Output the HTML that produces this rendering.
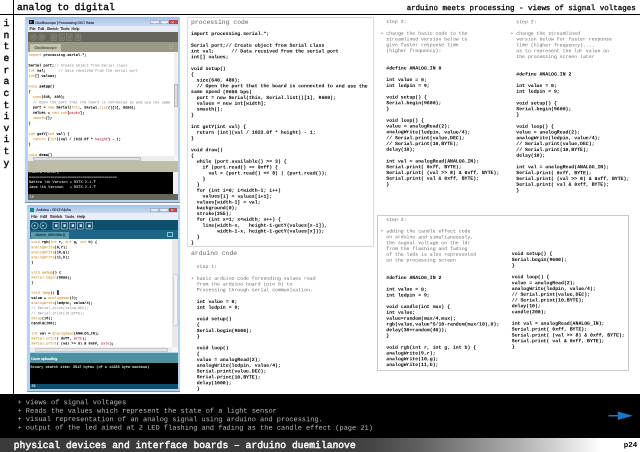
<!DOCTYPE html>
<html><head><meta charset="utf-8"><title>analog to digital</title>
<style>
html,body{margin:0;padding:0;background:#fff;}
body{text-rendering:geometricPrecision;width:640px;height:452px;position:relative;overflow:hidden;font-family:"Liberation Mono","DejaVu Sans Mono",monospace;color:#000;}
.abs{position:absolute;}
pre{margin:0;font-family:inherit;}
.code{position:absolute;font-size:4.84px;line-height:5.81px;font-weight:bold;color:#000;white-space:pre;}
.code .g{font-weight:normal;color:#777;}
.h{position:absolute;font-size:6.42px;line-height:7.7px;color:#666;white-space:pre;}
.box{position:absolute;border:1px solid #d6d6d6;box-sizing:border-box;background:#fff;}
</style></head><body><div id="wrap" style="will-change:transform;position:absolute;left:0;top:0;width:640px;height:452px;overflow:hidden;">

<!-- header -->
<div class="abs" style="left:0;top:13.5px;width:640px;height:1.2px;background:#000;"></div>
<div class="abs" style="left:13.1px;top:0;width:1.1px;height:394px;background:#000;"></div>
<div class="abs" style="left:17px;top:1.5px;font-size:9.6px;line-height:11.5px;font-weight:normal;-webkit-text-stroke:0.38px;white-space:pre;">analog to digital</div>
<div class="abs" style="right:4.3px;top:4.7px;font-size:7.49px;line-height:9px;font-weight:normal;-webkit-text-stroke:0.28px;white-space:pre;">arduino meets processing - views of signal voltages</div>

<!-- vertical word -->
<div class="abs" style="left:3.5px;top:18.2px;width:6px;font-size:9.67px;line-height:11.62px;font-weight:normal;-webkit-text-stroke:0.38px;text-align:center;white-space:pre;">i
n
t
e
r
a
c
t
i
v
i
t
y</div>


<!-- ===== Processing window ===== -->
<style>
.ed{position:absolute;font-size:3.58px;white-space:pre;color:#000;-webkit-text-stroke:0.06px;}
.k{color:#cf8c2e;} .c{color:#7c7c7c;} .r{color:#c4274a;}
.ui{position:absolute;font-family:"Liberation Sans",sans-serif;white-space:pre;-webkit-text-stroke:0.12px;}
</style>
<div class="abs" style="left:25px;top:17px;width:155.4px;height:185.4px;background:linear-gradient(#9dbbe0 0,#b0c9e8 2px,#bad0eb 5px,#c6d9f0 8.5px,#bdd4ef 14px,#b7d0ef 100%);border-radius:1.5px 1.5px 0 0;box-shadow:0 0 0.8px #8aa;"></div>
<!-- title -->
<div class="abs" style="left:29.2px;top:19.7px;width:4.5px;height:4.3px;background:#1a1a1a;"></div><svg class="abs" style="left:29.2px;top:19.7px;" width="4.5" height="4.3" viewBox="0 0 4.5 4.3"><path d="M0.8 0.9 L2.6 1.9 L0.8 2.9" fill="none" stroke="#e8e8e8" stroke-width="0.6"/></svg>
<div class="ui" style="left:35.3px;top:20.7px;font-size:3.6px;line-height:5px;color:#1d2b40;">Oscilloscope | Processing 0157 Beta</div>
<div class="abs" style="left:150.2px;top:19.6px;width:9.4px;height:4.7px;background:#e3e9f3;border:0.4px solid #a3b3cc;box-sizing:border-box;"></div>
<div class="abs" style="left:159.6px;top:19.6px;width:9.6px;height:4.7px;background:#e3e9f3;border:0.4px solid #a3b3cc;box-sizing:border-box;"></div>
<div class="abs" style="left:169.2px;top:19.6px;width:8.7px;height:4.7px;background:#cc4a40;border:0.4px solid #a05050;box-sizing:border-box;"></div>
<svg class="abs" style="left:150.2px;top:19.6px;" width="28" height="4.7" viewBox="0 0 28 4.7"><path d="M3.5 3.2h2.4 M13 1.6h2.6v1.8H13z M21.6 1.5l2 1.8 M23.6 1.5l-2 1.8" fill="none" stroke="#f4f6fa" stroke-width="0.55"/></svg>
<!-- menu -->
<div class="abs" style="left:28.2px;top:25.6px;width:150px;height:6.3px;background:#e6edf7;"></div>
<div class="ui" style="left:29.5px;top:27.2px;font-size:3.8px;line-height:5px;color:#1a1a1a;word-spacing:1.2px;">File Edit Sketch Tools Help</div>
<!-- toolbar -->
<div class="abs" style="left:28.2px;top:31.9px;width:150px;height:10.1px;background:#67665a;"></div>
<svg class="abs" style="left:28.2px;top:31.9px;" width="150" height="10.1" viewBox="0 0 150 10.1">
<g fill="#706f62" stroke="#8d8c7e" stroke-width="0.55">
<circle cx="5.6" cy="5.1" r="3.3"/><circle cx="13.8" cy="5.1" r="3.3"/>
<rect x="22.9" y="1.9" width="5.6" height="6.5"/><rect x="31" y="1.9" width="5.2" height="6.5"/><rect x="38.5" y="1.9" width="5.6" height="6.5"/><rect x="47.2" y="1.9" width="5.6" height="6.5"/>
</g>
<g fill="none" stroke="#98978a" stroke-width="0.5">
<circle cx="5.6" cy="5.1" r="1.3"/><circle cx="13.8" cy="5.1" r="1.3"/>
<path d="M24.4 3.4h2.4v3.4h-2.4z M32.4 3.6v3.2h2.4 M40.2 3.4l1.2 3.2 1.2-3.2 M48.8 6.6l1.2-3.2 1.2 3.2"/>
</g></svg>
<!-- tab row -->
<div class="abs" style="left:28.2px;top:42px;width:150px;height:9.6px;background:#9a9987;"></div>
<div class="abs" style="left:29.8px;top:43.6px;width:31.1px;height:8px;background:#c5c4b1;"></div>
<div class="ui" style="left:34.5px;top:45px;font-size:3.9px;line-height:5px;color:#55554a;">Oscilloscope</div>
<div class="abs" style="left:169px;top:44.3px;width:4.2px;height:4.6px;border:0.4px solid #a9a897;box-sizing:border-box;"></div>
<!-- editor -->
<div class="abs" style="left:28.2px;top:51.6px;width:150px;height:109.8px;background:#fff;overflow:hidden;"></div>

<!-- v scrollbar -->
<div class="abs" style="left:173.5px;top:51.6px;width:4.7px;height:104.8px;background:#f0f0f0;"></div>
<div class="abs" style="left:173.7px;top:84.1px;width:4.3px;height:23.4px;background:#e0e0e0;border:0.4px solid #b4b4b4;box-sizing:border-box;border-radius:0.8px;"></div>
<!-- h scrollbar -->
<div class="abs" style="left:28.2px;top:156.4px;width:150px;height:5px;background:#eeeeee;"></div>
<div class="abs" style="left:33.4px;top:156.7px;width:107.6px;height:4.4px;background:#e2e2e2;border:0.4px solid #bcbcbc;box-sizing:border-box;border-radius:0.8px;"></div>
<div class="abs" style="left:173.5px;top:156.4px;width:4.7px;height:5px;background:#f6f6f6;"></div>
<!-- status -->
<div class="abs" style="left:28.2px;top:161.4px;width:150px;height:11px;background:#bebdaa;"></div>
<!-- console -->
<div class="abs" style="left:28.2px;top:172.4px;width:150px;height:21.6px;background:#f0f0f0;"></div>
<div class="abs" style="left:28.2px;top:172.4px;width:144.7px;height:21.6px;background:#000;overflow:hidden;">
<pre class="ed" style="left:0.8px;top:-1.4px;line-height:5px;color:#d8d8d8;">Stable Library
=========================================
Native lib Version = RXTX-2.1-7
Java lib Version   = RXTX-2.1-7</pre></div>
<!-- bottom bar -->
<div class="abs" style="left:28.2px;top:194px;width:150px;height:5.7px;background:#67665a;"></div>
<div class="ui" style="left:29.8px;top:195.4px;font-size:3.4px;line-height:4.4px;color:#cfcfc0;">16</div>
<div class="abs" style="left:25px;top:201.9px;width:155.4px;height:0.6px;background:#7f8fa6;"></div>


<!-- ===== Arduino window ===== -->
<div class="abs" style="left:27px;top:205.2px;width:153px;height:186.4px;background:linear-gradient(#9dbbe0 0,#b0c9e8 2px,#bad0eb 4.5px,#c6d9f0 7.5px,#bdd4ef 13px,#b7d0ef 100%);border-radius:1.5px 1.5px 0 0;box-shadow:0 0 0.8px #8aa;"></div>
<div class="abs" style="left:30.2px;top:208.2px;width:4.2px;height:3.8px;background:#1e7f8e;"></div>
<div class="ui" style="left:36.3px;top:208.4px;font-size:3.7px;line-height:5px;color:#1d2b40;">Arduino - 0012 Alpha</div>
<div class="abs" style="left:150.2px;top:208.2px;width:9.2px;height:4.2px;background:#e3e9f3;border:0.4px solid #a3b3cc;box-sizing:border-box;"></div>
<div class="abs" style="left:159.4px;top:208.2px;width:9.4px;height:4.2px;background:#e3e9f3;border:0.4px solid #a3b3cc;box-sizing:border-box;"></div>
<div class="abs" style="left:168.8px;top:208.2px;width:8.4px;height:4.2px;background:#cc4a40;border:0.4px solid #a05050;box-sizing:border-box;"></div>
<svg class="abs" style="left:150.2px;top:208.2px;" width="28" height="4.2" viewBox="0 0 28 4.2"><path d="M3.5 2.9h2.4 M13 1.4h2.6v1.6H13z M21.4 1.3l2 1.7 M23.4 1.3l-2 1.7" fill="none" stroke="#f4f6fa" stroke-width="0.55"/></svg>
<!-- menu -->
<div class="abs" style="left:29.6px;top:212.7px;width:148.2px;height:7.1px;background:#e9eff8;"></div>
<div class="ui" style="left:31px;top:214.3px;font-size:4.1px;line-height:5px;color:#1a1a1a;word-spacing:1.4px;">File Edit Sketch Tools Help</div>
<!-- toolbar -->
<div class="abs" style="left:29.6px;top:219.8px;width:148.2px;height:10.6px;background:#0c4f6e;"></div>
<svg class="abs" style="left:29.6px;top:219.8px;" width="148.2" height="10.6" viewBox="0 0 148.2 10.6">
<g fill="none" stroke="#c9dde6" stroke-width="0.6">
<circle cx="4.8" cy="5.7" r="3.3"/><circle cx="13.3" cy="5.7" r="3.3"/>
<rect x="23" y="2.4" width="6" height="6.6"/><rect x="31.5" y="2.4" width="6" height="6.6"/><rect x="39.6" y="2.4" width="6" height="6.6"/><rect x="47.6" y="2.4" width="6" height="6.6"/><rect x="55.9" y="2.4" width="6.6" height="6.6"/>
</g>
<g fill="#c9dde6"><circle cx="4.6" cy="5.6" r="0.9"/><circle cx="13" cy="5.6" r="0.9"/><rect x="25" y="4.2" width="2.4" height="2.8"/><rect x="33.4" y="4.2" width="2.4" height="2.8"/><rect x="41.6" y="4.2" width="2.4" height="2.8"/><rect x="49.6" y="4.2" width="2.4" height="2.8"/><rect x="58" y="4.6" width="2.8" height="2.6"/></g>
</svg>
<!-- tab row -->
<div class="abs" style="left:29.6px;top:230.4px;width:148.2px;height:8.5px;background:#1c6689;"></div>
<div class="abs" style="left:31.3px;top:231.8px;width:37.5px;height:7.1px;background:#5b9aa9;"></div>
<div class="ui" style="left:35.6px;top:233.2px;font-size:3.6px;line-height:5px;color:#0b3442;">sketch_090108a §</div>
<div class="abs" style="left:167.2px;top:232.2px;width:5.4px;height:5.3px;border:0.5px solid #8fc0cf;box-sizing:border-box;"></div>
<!-- editor -->
<div class="abs" style="left:29.6px;top:238.9px;width:148.2px;height:113.4px;background:#fff;"></div>

<div class="abs" style="left:56.9px;top:290.2px;width:2.3px;height:4.9px;background:#c8ccd0;border:0.3px solid #666;box-sizing:border-box;"></div>
<!-- v scrollbar -->
<div class="abs" style="left:172.4px;top:238.9px;width:5.4px;height:108.5px;background:#e9e9e9;"></div>
<div class="abs" style="left:172.6px;top:273.7px;width:5px;height:52.3px;background:#f4f4f4;border:0.4px solid #d2d2d2;box-sizing:border-box;border-radius:0.8px;"></div>
<!-- h scrollbar -->
<div class="abs" style="left:29.6px;top:347.4px;width:148.2px;height:4.9px;background:#efefef;"></div>
<div class="abs" style="left:34.6px;top:347.7px;width:133.5px;height:4.3px;background:#e6e6e6;border:0.4px solid #c8c8c8;box-sizing:border-box;border-radius:0.8px;"></div>
<div class="abs" style="left:172.4px;top:347.4px;width:5.4px;height:5.1px;background:#f6f6f6;"></div>
<!-- status -->
<div class="abs" style="left:29.6px;top:352.5px;width:148.2px;height:10.4px;background:#4b919f;"></div>
<div class="ui" style="left:31.3px;top:356.6px;font-size:3.7px;line-height:5px;color:#fff;">Done uploading.</div>
<!-- console -->
<div class="abs" style="left:29.6px;top:362.8px;width:148.2px;height:21px;background:#000;overflow:hidden;">
<pre class="ed" style="left:1px;top:3px;line-height:5px;font-size:3.54px;color:#e0e0e0;">Binary sketch size: 3942 bytes (of a 14336 byte maximum)</pre></div>
<!-- bottom bar -->
<div class="abs" style="left:29.6px;top:383.8px;width:148.2px;height:5.7px;background:#0c4f6e;"></div>
<div class="ui" style="left:31.6px;top:384.4px;font-size:3.4px;line-height:4.4px;color:#d8e8ee;">20</div>
<div class="abs" style="left:27px;top:391.2px;width:153px;height:0.5px;background:#7f8fa6;"></div>

<svg class="abs et" style="left:0;top:0;" width="640" height="452" viewBox="0 0 640 452" xml:space="preserve">
<style>.et text{font-family:"Liberation Mono","DejaVu Sans Mono",monospace;fill:#000;stroke:#000;stroke-width:.12px;white-space:pre;}.et .k{fill:#cf953a;stroke:#cf953a;stroke-width:.05px;}.et .c{fill:#7c7c7c;stroke:none;}.et .r{fill:#c4274a;stroke:#c4274a;stroke-width:.06px;}.et .b{font-weight:bold;}</style>
<g transform="translate(28.50 0) skewY(0.03)" style="font-size:3.58px">
<text x="0" y="56.00"><tspan class="k">import</tspan> processing.serial.*;</text>
<text x="0" y="66.52">Serial port;<tspan class="c">// Create object from Serial class</tspan></text>
<text x="0" y="71.78"><tspan class="k">int</tspan> val;      <tspan class="c">// Data received from the serial port</tspan></text>
<text x="0" y="77.04"><tspan class="k">int</tspan>[] values;</text>
<text x="0" y="87.56"><tspan class="k">void</tspan> <tspan class="b">setup</tspan>()</text>
<text x="0" y="92.82">{</text>
<text x="0" y="98.08">  <tspan class="k">size</tspan>(640, 480);</text>
<text x="0" y="103.34">  <tspan class="c">// Open the port that the board is connected to and use the same</tspan></text>
<text x="0" y="108.60">  port = <tspan class="k">new</tspan> Serial(<tspan class="k">this</tspan>, Serial.<tspan class="k">list</tspan>()[1], 9600);</text>
<text x="0" y="113.86">  values = <tspan class="k">new int</tspan>[<tspan class="r">width</tspan>];</text>
<text x="0" y="119.12">  <tspan class="k">smooth</tspan>();</text>
<text x="0" y="124.38">}</text>
<text x="0" y="134.90"><tspan class="k">int</tspan> getY(<tspan class="k">int</tspan> val) {</text>
<text x="0" y="140.16">  <tspan class="k">return</tspan> (<tspan class="k">int</tspan>)(val / 1023.0f * <tspan class="r">height</tspan>) - 1;</text>
<text x="0" y="145.42">}</text>
<text x="0" y="155.94"><tspan class="k">void</tspan> <tspan class="b">draw</tspan>()</text>
</g>
<g transform="translate(31.30 0) skewY(0.03)" style="font-size:3.54px">
<text x="0" y="243.10"><tspan class="k">void</tspan> rgb(<tspan class="k">int</tspan> r, <tspan class="k">int</tspan> g, <tspan class="k">int</tspan> b) {</text>
<text x="0" y="248.17"><tspan class="k">analogWrite</tspan>(9,r);</text>
<text x="0" y="253.25"><tspan class="k">analogWrite</tspan>(10,g);</text>
<text x="0" y="258.32"><tspan class="k">analogWrite</tspan>(11,b);</text>
<text x="0" y="263.40">}</text>
<text x="0" y="273.55"><tspan class="k">void</tspan> <tspan class="b k">setup</tspan>() {</text>
<text x="0" y="278.62"><tspan class="k">Serial.begin</tspan>(9600);</text>
<text x="0" y="283.70">}</text>
<text x="0" y="293.85"><tspan class="k">void</tspan> <tspan class="b k">loop</tspan>() {</text>
<text x="0" y="298.93">value = <tspan class="k">analogRead</tspan>(2);</text>
<text x="0" y="304.00"><tspan class="k">analogWrite</tspan>(ledpin, value/4);</text>
<text x="0" y="309.07"><tspan class="c">// Serial.print(value,DEC);</tspan></text>
<text x="0" y="314.15"><tspan class="c">// Serial.print(10,BYTE);</tspan></text>
<text x="0" y="319.23"><tspan class="k">delay</tspan>(10);</text>
<text x="0" y="324.30">candle(200);</text>
<text x="0" y="334.45"><tspan class="k">int</tspan> val = <tspan class="k">analogRead</tspan>(ANALOG_IN);</text>
<text x="0" y="339.52"><tspan class="k">Serial.print</tspan>( 0xff, <tspan class="r">BYTE</tspan>);</text>
<text x="0" y="344.60"><tspan class="k">Serial.print</tspan>( (val &gt;&gt; 8) &amp; 0xff, <tspan class="r">BYTE</tspan>);</text>
</g>
</svg>
<!-- boxes -->
<div class="box" style="left:186.9px;top:16.9px;width:186.7px;height:229.9px;border-color:#dadada;"></div>
<div class="box" style="left:377.2px;top:215.2px;width:251.6px;height:156.2px;border-color:#cacaca;"></div>

<div class="h" style="left:191px;top:19.1px;">processing code</div>
<div class="h" style="left:191px;top:249.9px;">arduino code</div>


<!-- processing code -->


<!-- arduino code step 1 -->


<!-- step 2 left -->


<!-- step 2 right -->


<!-- step 3 left -->


<!-- step 3 right -->


<svg class="abs ct" style="left:0;top:0;" width="640" height="452" viewBox="0 0 640 452" xml:space="preserve">
<style>.ct text{font-family:"Liberation Mono","DejaVu Sans Mono",monospace;font-size:4.84px;font-weight:bold;fill:#000;white-space:pre;}.ct text.g{font-weight:normal;fill:#6b6b6b;}</style>
<g transform="translate(191.00 0) skewY(0.03)">
<text x="0.00" y="35.05">import processing.serial.*;</text>
<text x="0.00" y="46.66">Serial port;// Create object from Serial class</text>
<text x="0.00" y="52.47">int val;      // Data received from the serial port</text>
<text x="0.00" y="58.27">int[] values;</text>
<text x="0.00" y="69.89">void setup()</text>
<text x="0.00" y="75.69">{</text>
<text x="5.81" y="81.50">size(640, 480);</text>
<text x="5.81" y="87.30">// Open the port that the board is connected to and use the</text>
<text x="0.00" y="93.11">same speed (9600 bps)</text>
<text x="5.81" y="98.92">port = new Serial(this, Serial.list()[1], 9600);</text>
<text x="5.81" y="104.72">values = new int[width];</text>
<text x="5.81" y="110.53">smooth();</text>
<text x="0.00" y="116.33">}</text>
<text x="0.00" y="127.95">int getY(int val) {</text>
<text x="5.81" y="133.75">return (int)(val / 1023.0f * height) - 1;</text>
<text x="0.00" y="139.56">}</text>
<text x="0.00" y="151.17">void draw()</text>
<text x="0.00" y="156.98">{</text>
<text x="5.81" y="162.78">while (port.available() &gt;= 3) {</text>
<text x="11.62" y="168.59">if (port.read() == 0xff) {</text>
<text x="17.42" y="174.39">val = (port.read() &lt;&lt; 8) | (port.read());</text>
<text x="11.62" y="180.20">}</text>
<text x="5.81" y="186.01">}</text>
<text x="5.81" y="191.81">for (int i=0; i&lt;width-1; i++)</text>
<text x="11.62" y="197.62">values[i] = values[i+1];</text>
<text x="5.81" y="203.42">values[width-1] = val;</text>
<text x="5.81" y="209.23">background(0);</text>
<text x="5.81" y="215.04">stroke(255);</text>
<text x="5.81" y="220.84">for (int x=1; x&lt;width; x++) {</text>
<text x="11.62" y="226.65">line(width-x,   height-1-getY(values[x-1]),</text>
<text x="26.14" y="232.45">width-1-x, height-1-getY(values[x]));</text>
<text x="5.81" y="238.26">}</text>
<text x="0.00" y="244.07">}</text>
</g>
<g transform="translate(191.00 0) skewY(0.03)">
<text x="5.81" y="268.05" class="g">step 1:</text>
<text x="0.00" y="279.66" class="g">+ basic arduino code forsending values read</text>
<text x="5.81" y="285.47" class="g">from the arduino board (pin 0) to</text>
<text x="5.81" y="291.27" class="g">Processing through serial communication.</text>
<text x="5.81" y="302.89">int value = 0;</text>
<text x="5.81" y="308.69">int ledpin = 9;</text>
<text x="5.81" y="320.30">void setup()</text>
<text x="5.81" y="326.11">{</text>
<text x="5.81" y="331.92">Serial.begin(9600);</text>
<text x="5.81" y="337.72">}</text>
<text x="5.81" y="349.33">void loop()</text>
<text x="5.81" y="355.14">{</text>
<text x="5.81" y="360.95">value = analogRead(2);</text>
<text x="5.81" y="366.75">analogWrite(ledpin, value/4);</text>
<text x="5.81" y="372.56">Serial.print(value,DEC);</text>
<text x="5.81" y="378.36">Serial.print(10,BYTE);</text>
<text x="5.81" y="384.17">delay(1000);</text>
<text x="5.81" y="389.98">}</text>
</g>
<g transform="translate(380.50 0) skewY(0.03)">
<text x="5.81" y="23.05" class="g">step 2:</text>
<text x="0.00" y="34.66" class="g">+ change the basic code to the</text>
<text x="5.81" y="40.47" class="g">streamlined version below to</text>
<text x="5.81" y="46.27" class="g">give faster response time</text>
<text x="5.81" y="52.08" class="g">(higher frequency):</text>
<text x="5.81" y="69.50">#define ANALOG_IN 0</text>
<text x="5.81" y="81.11">int value = 0;</text>
<text x="5.81" y="86.92">int ledpin = 9;</text>
<text x="5.81" y="98.53">void setup() {</text>
<text x="5.81" y="104.33">Serial.begin(9600);</text>
<text x="5.81" y="110.14">}</text>
<text x="5.81" y="121.75">void loop() {</text>
<text x="5.81" y="127.56">value = analogRead(2);</text>
<text x="5.81" y="133.36">analogWrite(ledpin, value/4);</text>
<text x="5.81" y="139.17">// Serial.print(value,DEC);</text>
<text x="5.81" y="144.98">// Serial.print(10,BYTE);</text>
<text x="5.81" y="150.78">delay(10);</text>
<text x="5.81" y="162.39">int val = analogRead(ANALOG_IN);</text>
<text x="5.81" y="168.20">Serial.print( 0xff, BYTE);</text>
<text x="5.81" y="174.01">Serial.print( (val &gt;&gt; 8) &amp; 0xff, BYTE);</text>
<text x="5.81" y="179.81">Serial.print( val &amp; 0xff, BYTE);</text>
<text x="5.81" y="185.62">}</text>
</g>
<g transform="translate(510.50 0) skewY(0.03)">
<text x="5.81" y="23.15" class="g">step 2:</text>
<text x="0.00" y="34.76" class="g">+ change the streamlined</text>
<text x="5.81" y="40.57" class="g">version below for faster response</text>
<text x="5.81" y="46.37" class="g">time (higher frequency)....</text>
<text x="5.81" y="52.18" class="g">as to represent the ldr value on</text>
<text x="5.81" y="57.99" class="g">the processing screen later</text>
<text x="5.81" y="75.40">#define ANALOG_IN 2</text>
<text x="5.81" y="87.02">int value = 0;</text>
<text x="5.81" y="92.82">int ledpin = 9;</text>
<text x="5.81" y="104.43">void setup() {</text>
<text x="5.81" y="110.24">Serial.begin(9600);</text>
<text x="5.81" y="116.05">}</text>
<text x="5.81" y="127.66">void loop() {</text>
<text x="5.81" y="133.46">value = analogRead(2);</text>
<text x="5.81" y="139.27">analogWrite(ledpin, value/4);</text>
<text x="5.81" y="145.08">// Serial.print(value,DEC);</text>
<text x="5.81" y="150.88">// Serial.print(10,BYTE);</text>
<text x="5.81" y="156.69">delay(10);</text>
<text x="5.81" y="168.30">int val = analogRead(ANALOG_IN);</text>
<text x="5.81" y="174.11">Serial.print( 0xff, BYTE);</text>
<text x="5.81" y="179.91">Serial.print( (val &gt;&gt; 8) &amp; 0xff, BYTE);</text>
<text x="5.81" y="185.72">Serial.print( val &amp; 0xff, BYTE);</text>
<text x="5.81" y="191.52">}</text>
</g>
<g transform="translate(380.50 0) skewY(0.03)">
<text x="5.81" y="220.95" class="g">step 3:</text>
<text x="0.00" y="232.56" class="g">+ adding the candle effect code</text>
<text x="5.81" y="238.37" class="g">on arduino and simultaneously,</text>
<text x="5.81" y="244.17" class="g">the sugnal voltage on the ldr</text>
<text x="5.81" y="249.98" class="g">from the flashing and fading</text>
<text x="5.81" y="255.79" class="g">of the leds is also represented</text>
<text x="5.81" y="261.59" class="g">on the processing screen</text>
<text x="5.81" y="279.01">#define ANALOG_IN 2</text>
<text x="5.81" y="290.62">int value = 0;</text>
<text x="5.81" y="296.43">int ledpin = 9;</text>
<text x="5.81" y="308.04">void candle(int max) {</text>
<text x="5.81" y="313.85">int value;</text>
<text x="5.81" y="319.65">value=random(max/4,max);</text>
<text x="5.81" y="325.46">rgb(value,value*5/10-random(max/10),0);</text>
<text x="5.81" y="331.26">delay(30+random(40));</text>
<text x="5.81" y="337.07">}</text>
<text x="5.81" y="348.68">void rgb(int r, int g, int b) {</text>
<text x="5.81" y="354.49">analogWrite(9,r);</text>
<text x="5.81" y="360.29">analogWrite(10,g);</text>
<text x="5.81" y="366.10">analogWrite(11,b);</text>
</g>
<g transform="translate(511.75 0) skewY(0.03)">
<text x="0.00" y="255.10">void setup() {</text>
<text x="0.00" y="260.91">Serial.begin(9600);</text>
<text x="0.00" y="266.71">}</text>
<text x="0.00" y="278.32">void loop() {</text>
<text x="0.00" y="284.13">value = analogRead(2);</text>
<text x="0.00" y="289.94">analogWrite(ledpin, value/4);</text>
<text x="0.00" y="295.74">// Serial.print(value,DEC);</text>
<text x="0.00" y="301.55">// Serial.print(10,BYTE);</text>
<text x="0.00" y="307.35">delay(10);</text>
<text x="0.00" y="313.16">candle(200);</text>
<text x="0.00" y="324.77">int val = analogRead(ANALOG_IN);</text>
<text x="0.00" y="330.58">Serial.print( 0xff, BYTE);</text>
<text x="0.00" y="336.38">Serial.print( (val &gt;&gt; 8) &amp; 0xff, BYTE);</text>
<text x="0.00" y="342.19">Serial.print( val &amp; 0xff, BYTE);</text>
<text x="0.00" y="348.00">}</text>
</g>
</svg>
<!-- bottom black bar -->
<div class="abs" style="left:0;top:393.8px;width:640px;height:44.2px;background:#000;"></div>
<svg class="abs" style="left:0;top:0;" width="640" height="452" viewBox="0 0 640 452" xml:space="preserve"><g transform="translate(17.5 0) skewY(0.03)" style="font-family:'Liberation Mono','DejaVu Sans Mono',monospace;font-size:6.97px;fill:#b6b6b6;white-space:pre;">
<text x="0" y="404.20">+ views of signal voltages</text>
<text x="0" y="412.65">+ Reads the values which represent the state of a light sensor</text>
<text x="0" y="421.10">+ visual representation of an analog signal using arduino and processing.</text>
<text x="0" y="429.55">+ output of the led aimed at 2 LED flashing and fading as the candle effect (page 21)</text>
</g></svg>
<svg class="abs" style="left:606px;top:409px;" width="30" height="14" viewBox="0 0 30 14"><path d="M2.5 6 L12 6 L11.6 2.5 L27 6.75 L11.6 10.9 L12 7.5 L2.5 7.5 Z" fill="#1a76c6"/></svg>

<!-- footer -->
<div class="abs" style="left:0;top:438px;width:640px;height:14px;background:linear-gradient(to right,#3b3b3b 0,#3b3b3b 52%,#454545 58%,#626262 66%,#868686 73%,#afafaf 81%,#e0e0e0 89%,#ffffff 94%);"></div>
<div class="abs" style="left:13.8px;top:439.9px;font-size:9.67px;line-height:11.6px;font-weight:normal;-webkit-text-stroke:0.38px;color:#fff;white-space:pre;">physical devices and interface boards – arduino duemilanove</div>
<div class="abs" style="left:623.8px;top:441.5px;font-size:7.5px;line-height:9px;font-weight:bold;color:#000;white-space:pre;">p24</div>

</div></body></html>
